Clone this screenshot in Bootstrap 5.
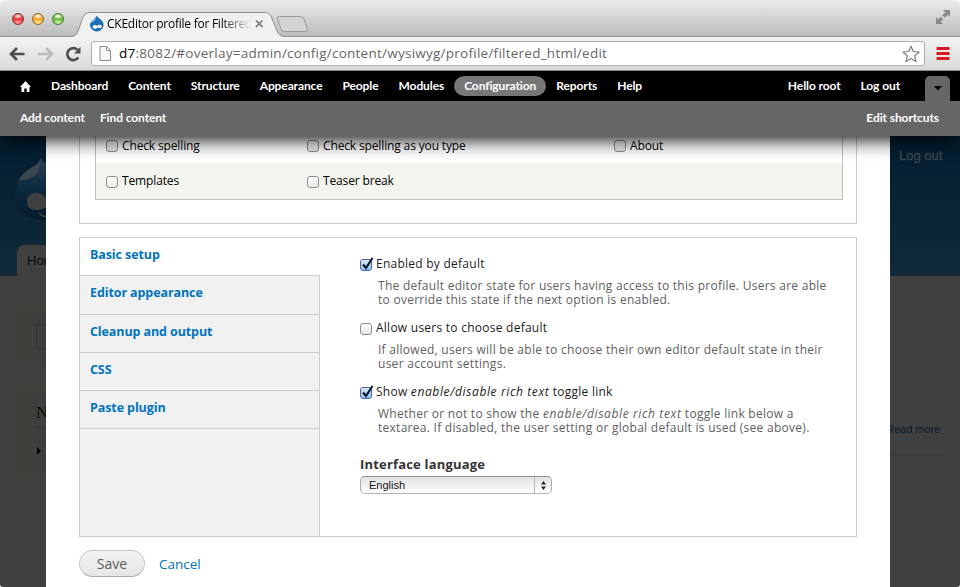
<!DOCTYPE html>
<html lang="en">
<head>
<meta charset="utf-8">
<title>CKEditor profile for Filtered HTML</title>
<link rel="stylesheet" href="https://cdn.jsdelivr.net/npm/bootstrap@5.3.0/dist/css/bootstrap.min.css">
<script src="https://cdn.jsdelivr.net/npm/bootstrap@5.3.0/dist/js/bootstrap.bundle.min.js"></script>
<style>
html,body{height:587px;overflow:hidden;background:#fff}
body{font:12px/14px "Open Sans","Noto Sans",sans-serif;color:#000;width:960px}
a{text-decoration:none}
svg{display:block;flex:none}
.window{height:587px;border-radius:5px 5px 3px 3px;overflow:hidden}
.strip{height:36px;background:linear-gradient(#ececec,#d6d6d6 45%,#bcbcbc);padding-left:12px}
.lights{gap:8px;width:66px;padding-top:2px}
.tabshape{width:208px;height:25px;margin-top:12px;margin-left:-2px}
.tabshape .shape{position:absolute;left:0;top:0;overflow:visible}
.tabin{position:relative;padding:3px 0 0 13px}
.tabtitle{width:146px;overflow:hidden;white-space:nowrap;margin-left:2px;line-height:17px;letter-spacing:-.25px;-webkit-mask-image:linear-gradient(90deg,#000 78%,transparent 99%);mask-image:linear-gradient(90deg,#000 78%,transparent 99%)}
.closex{margin:4px 0 0 2px}
.newtab{margin-top:16px;margin-left:-8px}
.full{margin:9px 9px 0 auto}
.tools{height:35px;background:linear-gradient(#f3f3f3,#dadada);border-top:1px solid #949494;border-bottom:1px solid #8a8a8a;padding:0 10px 0 9px}
.fwd{margin-left:13px}.rel{margin-left:11px}
.omni{width:834px;height:25px;border:1px solid #b0b0b0;border-radius:3px;background:#fff;padding:0 4px 0 7px;margin-left:10px}
.url{font-size:13.5px;color:#666;margin:-2px 0 0 8px;letter-spacing:.25px;white-space:nowrap}
.admin{height:30px;background:#000;position:relative;z-index:3;padding-left:20px}
.admin a,.short a{color:#fff;font:700 12px/20px Lato,sans-serif;white-space:nowrap;letter-spacing:-.1px}
.menu a{padding:0 10px}
.menu a.on{background:#777;border-radius:10px}
.nav1{margin-left:10px}
.nav2{margin-right:15px}
.toggle{width:25px;height:25px;background:#666;border-radius:5px 5px 0 0;margin-right:10px}
.short{height:35px;background:#666;box-shadow:0 3px 20px #000;position:relative;z-index:2;padding:0 21px 1px 20px}
.short .second{margin-left:15px}
.page{height:451px;background:#404040}
.side{overflow:hidden;height:451px}
.side.lt{width:46px}.side.rt{width:70px}
.blue{height:140px;background:linear-gradient(#021e30,#122a39)}
.logo{margin-left:14px}
.lt .blue{padding-top:21px}
.hometab{width:60px;height:31px;background:#404040;border-radius:8px 8px 0 0;margin:24px 0 0 17px;font:13px/31px "Liberation Sans",sans-serif;padding-left:10px;color:#0c0c0c}
.blk{width:60px;margin-left:16px;background:#3e3e3b;padding-left:20px}
.blk1{height:60px;margin-top:31px;padding-top:17px}
.fld{height:25px;border:1px solid #313131}
.blk2{height:90px;margin-top:21px;padding-top:15px}
.blk2 h2{font:17px/20px "Liberation Serif",serif;margin:0;color:#0c0c0c;height:25px;border-bottom:1px solid #333}
.blk2 svg{margin-top:19px}
.rt .blue{font:13px/15px "Liberation Sans",sans-serif;color:#3f464c;padding:12px 0 0 9px;-webkit-text-stroke:.3px #3f464c}
.more{font:11px/14px "Liberation Sans",sans-serif;color:#0a1c2b;margin:146px 0 0 -4px;height:33px;width:59px;white-space:nowrap;border-bottom:1px solid #333}
.panelx{width:844px;background:#fff;padding:0 33px}
.box1{height:88px;border:1px solid #ccc;border-top:0;padding:0 13px 0 15px;letter-spacing:-.14px}
.opts{border:1px solid #bebfb9;border-top:0}
.opts>div{padding-left:10px}
.r1{height:27px;line-height:19px}
.r2{height:36px;background:#f3f4ee;line-height:16px}
.r1 .chk{margin-top:4px}
.c1{width:201px}.c2{width:307px}
.chk{width:12px;height:12px;border:1px solid #8e8e8e;border-radius:3px;background:linear-gradient(#fff,#e6e6e6);margin-right:4px;margin-top:2px;flex:none}
.r2 .chk{margin-top:3px}
.chk.yes{border-color:#4a63a0;background:linear-gradient(#dcebfa,#8fc0f0);position:relative}
.chk svg{position:absolute;left:0;top:-3px}
.box2{height:300px;border:1px solid #ccc;margin-top:13px}
.vt{width:240px;background:#f1f1f1}
.vt a{font-weight:700;font-size:12.5px;letter-spacing:-.1px;color:#0074bd;padding:0 10px;border-bottom:1px solid #ccc;border-right:1px solid #ccc;line-height:34px;height:38.3px}
.vt a.sel{border-right-color:#fff;background:#fff}
.vt .rest{border-right:1px solid #ccc}
.form{padding:19px 0 0 40px;color:#1c1c1c}
.line{height:14px;letter-spacing:.25px;white-space:nowrap}
.desc{color:#5e5e5e;padding-left:18px;margin:8px 0 14px;white-space:nowrap;letter-spacing:.27px}
.form em{letter-spacing:.62px}
.lang{font-size:13px;font-weight:700;margin-top:22px;color:#333;letter-spacing:.18px}
.sel2{width:192px;height:18px;border:1px solid #a3a3a3;border-color:#8f8f8f #a8a8a8 #b5b5b5;border-radius:5px;background:linear-gradient(#e2e2e2,#fff);font:11px/16px "Liberation Sans",sans-serif;padding-left:8px;margin-top:5px;color:#111}
.arr{width:17px;border-left:1px solid #bbb}
.acts{margin-top:13px}
.save{width:66px;height:27px;border:1px solid #c8c8c8;border-bottom-color:#aaa;border-radius:14px;background:linear-gradient(#f3f3f3,#e6e6e6);font-size:14px;color:#5a5a5a}
.cancel{font-size:13.5px;color:#0074bd;margin-left:14px}
</style>
</head>
<body>
<div class="window">
 <div class="strip d-flex align-items-start">
  <div class="lights d-flex align-self-center">
   <svg width="12" height="12"><circle cx="6" cy="6" r="5.5" fill="#e8464a" stroke="#8e3a3a"/><ellipse cx="6" cy="3.3" rx="3" ry="1.7" fill="#fbc4c0"/><ellipse cx="6" cy="9" rx="3" ry="1.6" fill="#ff8c86"/></svg>
   <svg width="12" height="12"><circle cx="6" cy="6" r="5.5" fill="#f0ac3c" stroke="#8f6a2c"/><ellipse cx="6" cy="3.3" rx="3" ry="1.7" fill="#fdeac0"/><ellipse cx="6" cy="9" rx="3" ry="1.6" fill="#ffe07a"/></svg>
   <svg width="12" height="12"><circle cx="6" cy="6" r="5.5" fill="#7cbf55" stroke="#4a7a38"/><ellipse cx="6" cy="3.3" rx="3" ry="1.7" fill="#dcf4c8"/><ellipse cx="6" cy="9" rx="3" ry="1.6" fill="#b8ee8c"/></svg>
  </div>
  <div class="tabshape position-relative">
   <svg class="shape" width="208" height="25"><path d="M-4 24.5C0 24 1 22 2.500 18L7 5Q9 .5 13 .5H189Q193 .5 195 4L201 19Q203 24 208 24.500V25.500H-4Z" fill="#f1f1f1"/><path d="M-4 24.5C0 24 1 22 2.500 18L7 5Q9 .5 13 .5H189Q193 .5 195 4L201 19Q203 24 208 24.500" fill="none" stroke="#8f8f8f"/></svg>
   <div class="tabin d-flex">
    <svg width="16" height="17" viewBox="0 0 16 17"><path d="M7.6.5C8.400 3 14.600 4.600 14.600 10A6.800 6.500 0 0 1 1 10C1 6 6.800 4 7.600.500Z" fill="#1f6fb4"/><path d="M7.200 2C5 4 3 5 2.300 8 5 7 7.500 4.500 7.200 2Z" fill="#6fb3e0"/><path d="M4 12.500C3 10 6 9 8.200 11 10 9 13 9.500 12.600 12 12 14 10 12.500 8.500 12.500 7 14 5 14.500 4 12.500Z" fill="#fff"/></svg>
    <div class="tabtitle">CKEditor profile for Filtered</div>
    <svg class="closex" width="9" height="9"><path d="M1 1.500 7.500 8M7.500 1.500 1 8" stroke="#777" stroke-width="1.700"/></svg>
   </div>
  </div>
  <svg class="newtab" width="34" height="18"><path d="M1.500 3Q.500.500 3.500.500H24Q27 .500 28 3L31.500 13Q32 15.500 29 15.500H9Q6 15.500 5 13Z" fill="#d4d4d4" stroke="#989898"/></svg>
  <svg class="full" width="16" height="16"><g fill="#8b8b8b"><path d="M8 1h7v7l-2.200-2.200-3 3-2.500-2.500 3-3Z"/><path d="M1 15V8l2.200 2.200 2.500-2.500 2.500 2.500-2.500 2.500L8 15Z"/></g></svg>
 </div>
 <div class="tools d-flex align-items-center">
  <svg width="16" height="14"><path d="M15.500 7H3M8 1 2 7l6 6" fill="none" stroke="#4d4d4d" stroke-width="2.600"/></svg>
  <svg class="fwd" width="16" height="14"><path d="M0 7H13M8 1l6 6-6 6" fill="none" stroke="#bcbcbc" stroke-width="2.600"/></svg>
  <svg class="rel" width="16" height="16"><path d="M13.300 11.500A6 6 0 1 1 12.500 3.800" fill="none" stroke="#4d4d4d" stroke-width="2.600"/><path d="M15.500.800V7.500H9Z" fill="#4d4d4d"/></svg>
  <div class="omni d-flex align-items-center">
   <svg width="12" height="15"><path d="M1 .5H7.500L11.500 4.500V14.500H1ZM7.500.500V4.500H11.500" fill="#f8f8f8" stroke="#8c8c8c"/></svg>
   <div class="url"><span class="text-black">d7</span>:8082/#overlay=admin/config/content/wysiwyg/profile/filtered_html/edit</div>
   <svg class="ms-auto" width="18" height="18"><path d="M9 1.200 11.300 6.500 17 7 12.700 10.900 14 16.600 9 13.600 4 16.600 5.300 10.900 1 7 6.700 6.500Z" fill="#fff" stroke="#7b7b7b" stroke-width="1.200" stroke-linejoin="round"/></svg>
  </div>
  <svg class="ms-auto" width="14" height="13"><path d="M.5 1.500h13M.5 6.500h13M.5 11.500h13" stroke="#d8191f" stroke-width="3"/></svg>
 </div>
 <nav class="admin d-flex align-items-center">
  <svg width="11" height="11"><path d="M5.500 0 11 6H9.500V11H6.700V7.500H4.300V11H1.500V6H0Z" fill="#fff"/></svg>
  <div class="menu nav1 d-flex">
   <a href="#">Dashboard</a><a href="#">Content</a><a href="#">Structure</a><a href="#">Appearance</a><a href="#">People</a><a href="#">Modules</a><a href="#" class="on">Configuration</a><a href="#">Reports</a><a href="#">Help</a>
  </div>
  <div class="menu nav2 d-flex ms-auto"><a href="#">Hello root</a><a href="#">Log out</a></div>
  <div class="toggle d-flex align-self-end align-items-center justify-content-center"><svg width="8" height="5"><path d="M0 0H8L4 4.500Z"/></svg></div>
 </nav>
 <div class="short d-flex align-items-center"><a href="#">Add content</a><a href="#" class="second">Find content</a><a href="#" class="ms-auto">Edit shortcuts</a></div>
 <div class="page d-flex">
  <div class="side lt">
   <div class="blue">
    <svg class="logo" width="48" height="64" viewBox="0 0 48 64"><defs><linearGradient id="lg" x2="0" y2="1"><stop stop-color="#2c4452"/><stop offset=".5" stop-color="#0b2a3f"/><stop offset="1" stop-color="#06192a"/></linearGradient></defs><path d="M27 0C28 10 54 14 54 38A26.500 25 0 0 1 1 38C1 16 24 14 27 0Z" fill="url(#lg)"/><path d="M26 3C25 8 10 12 5 23 18 24 27 16 26 3Z" fill="#3a464d"/><path d="M13 45C13 34 25 33 32 41L40 46C36 48 30 53 23 53 16 53 13 50 13 45Z" fill="#404040"/><path d="M25 56Q28 61 38 59" fill="none" stroke="#404040" stroke-width="1.500"/></svg>
    <div class="hometab">Home</div>
   </div>
   <div class="blk blk1"><div class="fld"></div></div>
   <div class="blk blk2"><h2>Navigation</h2><svg width="5" height="8"><path d="M1 0 5 4 1 8Z"/></svg></div>
  </div>
  <main class="panelx">
   <div class="box1"><div class="opts">
    <div class="r1 d-flex"><div class="c1 d-flex"><i class="chk"></i>Check spelling</div><div class="c2 d-flex"><i class="chk"></i>Check spelling as you type</div><div class="d-flex"><i class="chk"></i>About</div></div>
    <div class="r2 d-flex align-items-center"><div class="c1 d-flex"><i class="chk"></i>Templates</div><div class="c2 d-flex"><i class="chk"></i>Teaser break</div></div>
   </div></div>
   <div class="box2 d-flex">
    <div class="vt d-flex flex-column"><a href="#" class="sel">Basic setup</a><a href="#">Editor appearance</a><a href="#">Cleanup and output</a><a href="#">CSS</a><a href="#">Paste plugin</a><div class="rest flex-grow-1"></div></div>
    <div class="form">
     <div class="line d-flex"><i class="chk yes"><svg width="13" height="14"><path d="M2 7.500 5 11 11.500 1" fill="none" stroke="#0c1a30" stroke-width="2.200"/></svg></i>Enabled by default</div>
     <div class="desc">The default editor state for users having access to this profile. Users are able<br>to override this state if the next option is enabled.</div>
     <div class="line d-flex"><i class="chk"></i>Allow users to choose default</div>
     <div class="desc">If allowed, users will be able to choose their own editor default state in their<br>user account settings.</div>
     <div class="line d-flex"><i class="chk yes"><svg width="13" height="14"><path d="M2 7.500 5 11 11.500 1" fill="none" stroke="#0c1a30" stroke-width="2.200"/></svg></i><span>Show <em>enable/disable rich text</em> toggle link</span></div>
     <div class="desc">Whether or not to show the <em>enable/disable rich text</em> toggle link below a<br>textarea. If disabled, the user setting or global default is used (see above).</div>
     <div class="lang">Interface language</div>
     <div class="sel2 d-flex justify-content-between">English<span class="arr d-flex align-items-center justify-content-center"><svg width="5" height="9"><path d="M0 3.500 2.500 0 5 3.500ZM0 5.500H5L2.500 9Z" fill="#222"/></svg></span></div>
    </div>
   </div>
   <div class="acts d-flex align-items-center"><div class="save d-flex align-items-center justify-content-center">Save</div><a href="#" class="cancel">Cancel</a></div>
  </main>
  <div class="side rt">
   <div class="blue">Log out</div>
   <div class="more">Read more</div>
  </div>
 </div>
</div>
</body>
</html>
